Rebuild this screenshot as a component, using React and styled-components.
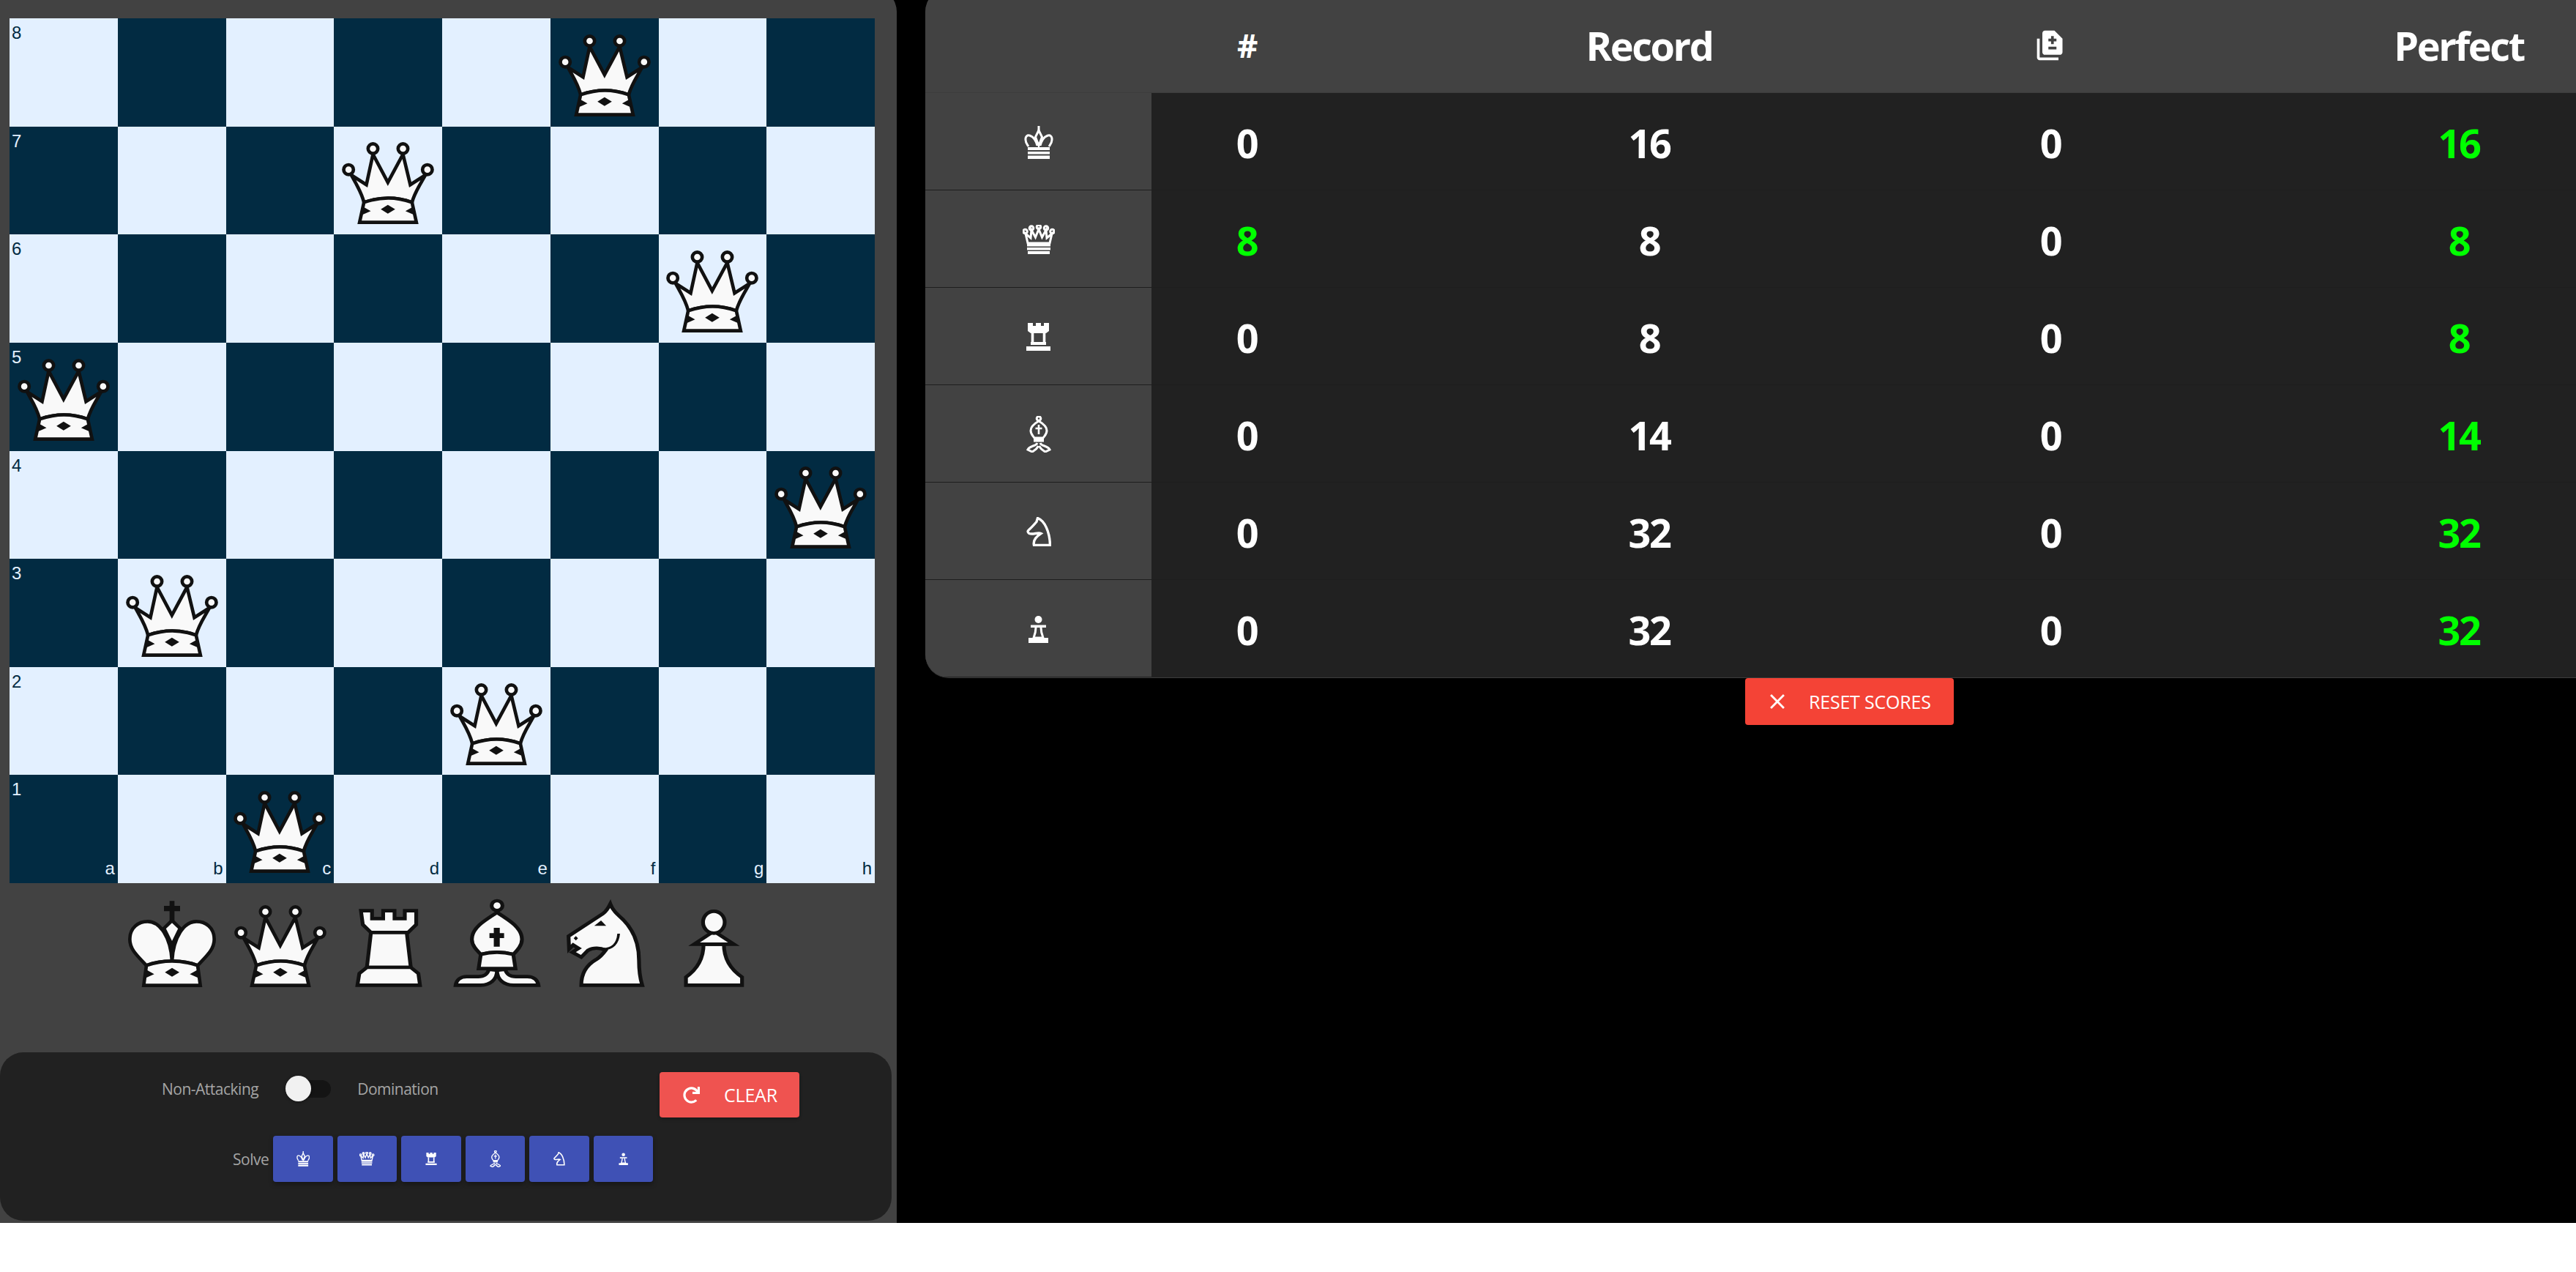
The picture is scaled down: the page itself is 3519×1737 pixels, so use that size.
import React from 'react';
import styled, { createGlobalStyle } from 'styled-components';
import { FaRedo } from 'react-icons/fa';
import { MdClose } from 'react-icons/md';

const GlobalStyle = createGlobalStyle`
  html, body {
    margin: 0;
    padding: 0;
    background: #fff;
    overflow: hidden;
  }
`;

const Page = styled.div`
  display: flex;
  align-items: flex-start;
  height: 1670px;
  background: #000;
  overflow: hidden;
  font-family: 'Open Sans', 'Noto Sans', sans-serif;
`;

const BoardPanel = styled.section`
  flex: 0 0 1225px;
  display: flex;
  flex-direction: column;
  height: 1686px;
  margin-top: -16px;
  background: #424242;
  border-top-right-radius: 32px;
`;

const Board = styled.div`
  display: grid;
  grid-template-columns: repeat(8, minmax(0, 1fr));
  grid-template-rows: repeat(8, minmax(0, 1fr));
  width: 1182px;
  height: 1181px;
  margin: 41px 0 0 13px;
  font-family: 'Liberation Sans', Arial, sans-serif;
`;

const Square = styled.div`
  position: relative;
  display: flex;
  align-items: center;
  justify-content: center;
  background: ${props => (props.$dark ? '#022b42' : '#e3f0ff')};
  color: ${props => (props.$dark ? '#e3f0ff' : '#022b42')};
`;

const Rank = styled.span`
  position: absolute;
  top: 6px;
  left: 3px;
  font-size: 24px;
  line-height: 28px;
`;

const File = styled.span`
  position: absolute;
  right: 4px;
  bottom: 6px;
  font-size: 24px;
  line-height: 28px;
`;

const Tray = styled.div`
  display: flex;
  margin: 15px 0 0 161px;
`;

const BoardPiece = styled.div`
  display: flex;
  flex-shrink: 0;
  margin-top: -4px;
`;

const ControlsCard = styled.div`
  display: flex;
  flex-direction: column;
  width: 1218px;
  height: 230px;
  margin-top: 86px;
  background: #212121;
  border-radius: 32px;
`;

const ModeRow = styled.div`
  display: flex;
  align-items: flex-start;
  padding: 27px 0 0 221px;
`;

const Label = styled.span`
  font-size: 21px;
  font-weight: 400;
  line-height: 28px;
  letter-spacing: -0.5px;
  color: rgba(255, 255, 255, 0.6);
`;

const ModeLabels = styled.div`
  display: flex;
  align-items: center;
  width: 680px;
  height: 46px;
`;

const Switch = styled.div`
  position: relative;
  width: 57px;
  height: 24px;
  margin: 0 36px 0 42px;
  border-radius: 12px;
  background: #141414;
`;

const Knob = styled.div`
  position: absolute;
  top: -6px;
  left: -5px;
  width: 35px;
  height: 35px;
  border-radius: 50%;
  background: #f1f1f1;
  box-shadow: 0 1px 4px rgba(0, 0, 0, 0.4);
`;

const ActionButton = styled.button`
  display: flex;
  align-items: center;
  box-sizing: border-box;
  width: ${props => props.$width}px;
  height: ${props => props.$height}px;
  padding: 0 0 0 ${props => props.$pad}px;
  border: 0;
  border-radius: 4px;
  background: ${props => props.$bg};
  color: #fff;
  font-family: inherit;
  font-size: 25px;
  letter-spacing: -0.2px;
  text-transform: uppercase;
  box-shadow: 0 2px 4px rgba(0, 0, 0, 0.3);
`;

const ButtonText = styled.span`
  margin-left: ${props => props.$gap}px;
`;

const SolveRow = styled.div`
  display: flex;
  align-items: center;
  gap: 6px;
  margin-top: 25px;
  padding-left: 318px;
`;

const SolveButton = styled.button`
  display: flex;
  align-items: center;
  justify-content: center;
  width: 81.5px;
  height: 63px;
  padding: 0;
  border: 0;
  border-radius: 4px;
  background: #3f51b5;
  color: #fff;
  box-shadow: 0 3px 6px rgba(0, 0, 0, 0.35);
`;

const ScoresPanel = styled.section`
  flex: 0 0 2525px;
  display: flex;
  flex-direction: column;
  align-items: center;
  margin: -16px 0 0 39px;
`;

const ScoreTable = styled.div`
  width: 100%;
  overflow: hidden;
  border-radius: 32px;
  background: #212121;
  border-bottom: 1px solid #3c3c3c;
  font-weight: 700;
  color: #fff;
`;

const Row = styled.div`
  display: grid;
  grid-template-columns: 309px 260px 840px 256px 860px;
  height: ${props => (props.$head ? 143 : 133)}px;
  background: ${props => (props.$head ? '#424242' : 'transparent')};
  border-bottom: 1px solid ${props => (props.$last ? 'transparent' : 'rgba(0, 0, 0, 0.08)')};
  box-sizing: border-box;
`;

const PieceCell = styled.div`
  display: flex;
  align-items: center;
  justify-content: center;
  padding-top: 2px;
  background: #424242;
`;

const Cell = styled.div`
  display: flex;
  align-items: center;
  justify-content: center;
  padding-top: 3px;
  font-size: ${props => props.$size || 54}px;
  letter-spacing: -2.4px;
  color: ${props => (props.$hit ? '#00ff00' : '#fff')};
`;

const HeadCell = styled(Cell)`
  padding-top: 13px;
`;

const PIECES = {
  k: {
    box: '33 60 444 390',
    art: (
      <>
        <path d="M245 88h20v20h23v22h-23v42h-20v-42h-23v-22h23z" fill="#111" stroke="none" />
        <path d="M255 168L222 200L255 268L288 200Z" />
        <path d="M150 352C110 310 82 285 82 245C82 195 120 172 155 172C205 172 250 235 255 335C215 335 180 340 150 352Z" />
        <path d="M360 352C400 310 428 285 428 245C428 195 390 172 355 172C305 172 260 235 255 335C295 335 330 340 360 352Z" />
        <path d="M150 352C220 328 290 328 360 352L371 434H139Z" />
        <path d="M255 362L285 380L255 398L226 380Z" fill="#111" stroke="none" />
        <path d="M150 370L182 388L145 404ZM360 370L328 388L365 404Z" fill="#111" stroke="none" />
      </>
    ),
  },
  q: {
    box: '476.5 60 444 390',
    art: (
      <>
        <path d="M600 352C590 310 570 280 548 240L610 280L637 155L698 270L760 155L790 280L852 240C830 280 808 310 797 352C730 328 670 328 600 352Z" />
        <circle cx="537" cy="218" r="20" />
        <circle cx="637" cy="132" r="20" />
        <circle cx="760" cy="132" r="20" />
        <circle cx="860" cy="218" r="20" />
        <path d="M600 352C670 328 730 328 797 352L815 434H582Z" />
        <path d="M698 362L728 380L698 398L669 380Z" fill="#111" stroke="none" />
        <path d="M596 370L628 388L590 404ZM802 370L770 388L808 404Z" fill="#111" stroke="none" />
      </>
    ),
  },
  r: {
    box: '-9.5 60 400 390',
    art: (
      <>
        <path d="M88 128H129V160H170V128H212V160H250V128H292V185L262 217H125L95 185Z" />
        <path d="M125 217L110 360H272L257 217Z" />
        <path d="M110 360L82 385L75 433H306L300 385L272 360Z" />
      </>
    ),
  },
  b: {
    box: '390 60 400 390',
    art: (
      <>
        <circle cx="590" cy="107" r="20" />
        <path d="M590 135C540 170 497 200 497 245C497 270 515 290 530 307C570 295 610 295 650 307C665 290 682 270 682 245C682 200 640 170 590 135Z" />
        <path d="M578 198h22v22h16v20h-16v35h-22v-35h-16v-20h16z" fill="#111" stroke="none" />
        <path d="M530 307C570 295 610 295 650 307L658 365H522Z" />
        <path d="M590 372C590 410 565 433 530 433H437C440 412 455 398 478 398H520C545 398 555 388 560 368Z" />
        <path d="M590 372C590 410 615 433 650 433H743C740 412 725 398 702 398H660C635 398 625 388 620 368Z" />
      </>
    ),
  },
  n: {
    box: '794 60 400 390',
    art: (
      <>
        <path d="M905 433C905 385 925 350 960 328C975 318 985 305 995 290C975 280 950 278 930 290L905 318L872 298L895 282L875 268L860 285L858 232L985 140C1000 128 1005 115 1012 100C1020 125 1035 140 1060 165C1100 210 1118 270 1118 330C1118 370 1122 405 1130 433Z" />
        <path d="M985 285C1020 285 1040 262 1043 222" fill="none" strokeWidth="10" />
        <path d="M953 190L978 168L997 190Z" fill="#111" stroke="none" />
        <path d="M885 232L893 241L885 250L877 241Z" fill="#111" stroke="none" />
      </>
    ),
  },
  p: {
    box: '1187.5 60 400 390',
    art: (
      <>
        <path d="M1350 265C1350 320 1330 365 1285 400V433H1492V400C1445 365 1425 320 1425 265Z" />
        <path d="M1388 212L1315 265H1462Z" />
        <ellipse cx="1388" cy="175" rx="40" ry="45" />
      </>
    ),
  },
};

function Piece({ type }) {
  return (
    <svg
      width="148"
      height="130"
      viewBox={PIECES[type].box}
      preserveAspectRatio="none"
      fill="#f9f9f9"
      stroke="#111"
      strokeWidth="14"
    >
      {PIECES[type].art}
    </svg>
  );
}

const ICONS = {
  k: {
    w: 40,
    h: 45,
    art: (
      <>
        <path d="M20 0v7" />
        <path d="M20 6L15.5 15L20 27L24.5 15Z" />
        <path d="M18 27C14 11 1 9 2 19C2 23 4 25 6 28" />
        <path d="M22 27C26 11 39 9 38 19C38 23 36 25 34 28" />
        <path d="M5 29H35V33H5ZM5 35H35V38.5H5ZM5 40.5H35V45H5Z" fill="currentColor" stroke="none" />
      </>
    ),
  },
  q: {
    w: 44,
    h: 40,
    art: (
      <>
        <circle cx="3.5" cy="9" r="2.8" />
        <circle cx="12" cy="4.5" r="2.8" />
        <circle cx="22" cy="3" r="2.8" />
        <circle cx="32" cy="4.5" r="2.8" />
        <circle cx="40.5" cy="9" r="2.8" />
        <path d="M7 25L4 12L11 18L12 7L17.5 17L22 6L26.5 17L32 7L33 18L40 12L37 25Z" />
        <path d="M6 26H38V29.5H6ZM6 31H38V34.5H6ZM7 36H37V40H7Z" fill="currentColor" stroke="none" />
      </>
    ),
  },
  r: {
    w: 35,
    h: 38,
    art: (
      <>
        <path d="M3 0H10V4H14V0H21V4H25V0H32V11L28 14H7L3 11Z" fill="currentColor" stroke="none" />
        <path d="M9.5 14V28M25.5 14V28" strokeWidth="3.6" />
        <path d="M7 26H28V30H7Z" fill="currentColor" stroke="none" />
        <path d="M1 32H34V38H1Z" fill="currentColor" stroke="none" />
      </>
    ),
  },
  b: {
    w: 34,
    h: 50,
    art: (
      <>
        <circle cx="17" cy="3.5" r="2.8" />
        <path d="M17 7C10 11 6 15 6 20C6 25 9 27 11 30H23C25 27 28 25 28 20C28 15 24 11 17 7Z" />
        <path d="M17 12V25M12.5 17H21.5" strokeWidth="2.6" />
        <path d="M10 31H24V35.5H10Z" fill="currentColor" stroke="none" />
        <path d="M15 37C13 42 5 40 2 46L8 49C11 47 14 46 16.5 41" strokeWidth="3" />
        <path d="M19 37C21 42 29 40 32 46L26 49C23 47 20 46 17.5 41" strokeWidth="3" />
      </>
    ),
  },
  n: {
    w: 34,
    h: 40,
    art: (
      <>
        <path
          d="M10.5 38.5C9 32 13 27 20 22.5C16 20.5 9 24.5 4 22.5C1.5 21 1.5 19 3.5 17.5C7 14.5 11 10 14 6.5L15.5 1.5C25 5 32 20 32.5 38.5Z"
          strokeWidth="3.4"
        />
      </>
    ),
  },
  p: {
    w: 29,
    h: 38,
    art: (
      <>
        <circle cx="14.5" cy="6" r="5" fill="currentColor" stroke="none" />
        <path d="M4 13.5H25V17H4Z" fill="currentColor" stroke="none" />
        <path d="M11 17C11 23 10 26 8 31H21C19 26 18 23 18 17" />
        <path d="M1 31H28V38H1Z" fill="currentColor" stroke="none" />
      </>
    ),
  },
};

function PieceIcon({ type, scale = 1 }) {
  const icon = ICONS[type];
  return (
    <svg
      width={icon.w * scale}
      height={icon.h * scale}
      viewBox={`0 0 ${icon.w} ${icon.h}`}
      fill="none"
      stroke="currentColor"
      strokeWidth="3"
    >
      {icon.art}
    </svg>
  );
}

const QUEENS = { '0,5': 1, '1,3': 1, '2,6': 1, '3,0': 1, '4,7': 1, '5,1': 1, '6,4': 1, '7,2': 1 };
const FILES = ['a', 'b', 'c', 'd', 'e', 'f', 'g', 'h'];
const ORDER = ['k', 'q', 'r', 'b', 'n', 'p'];

const SCORES = [
  { type: 'k', count: 0, record: 16, perfect: 16 },
  { type: 'q', count: 8, record: 8, perfect: 8 },
  { type: 'r', count: 0, record: 8, perfect: 8 },
  { type: 'b', count: 0, record: 14, perfect: 14 },
  { type: 'n', count: 0, record: 32, perfect: 32 },
  { type: 'p', count: 0, record: 32, perfect: 32 },
];

function ChessBoard() {
  const squares = [];
  for (let r = 0; r < 8; r++) {
    for (let c = 0; c < 8; c++) {
      squares.push(
        <Square key={`${r}-${c}`} $dark={(r + c) % 2 === 1}>
          {c === 0 && <Rank>{8 - r}</Rank>}
          {r === 7 && <File>{FILES[c]}</File>}
          {QUEENS[`${r},${c}`] && (
            <BoardPiece>
              <Piece type="q" />
            </BoardPiece>
          )}
        </Square>
      );
    }
  }
  return <Board>{squares}</Board>;
}

export default function App() {
  return (
    <Page>
      <GlobalStyle />
      <BoardPanel>
        <ChessBoard />
        <Tray>
          {ORDER.map(type => (
            <Piece key={type} type={type} />
          ))}
        </Tray>
        <ControlsCard>
          <ModeRow>
            <ModeLabels>
              <Label>Non-Attacking</Label>
              <Switch>
                <Knob />
              </Switch>
              <Label>Domination</Label>
            </ModeLabels>
            <div>
              <ActionButton $width={191} $height={62} $pad={32} $bg="#ef5350">
                <FaRedo size={23} />
                <ButtonText $gap={33}>Clear</ButtonText>
              </ActionButton>
            </div>
          </ModeRow>
          <SolveRow>
            <Label>Solve</Label>
            {ORDER.map(type => (
              <SolveButton key={type}>
                <PieceIcon type={type} scale={0.46} />
              </SolveButton>
            ))}
          </SolveRow>
        </ControlsCard>
      </BoardPanel>
      <ScoresPanel>
        <ScoreTable>
          <Row $head>
            <div />
            <HeadCell $size={44}>#</HeadCell>
            <HeadCell>Record</HeadCell>
            <HeadCell>
              <svg width="44" height="44" viewBox="0 0 24 24" fill="#fff">
                <path d="M18 23H4c-1.1 0-2-.9-2-2V7h2v14h14v2zM15 1H8c-1.1 0-1.99.9-1.99 2L6 17c0 1.1.89 2 1.99 2H19c1.1 0 2-.9 2-2V7l-6-6zm1.5 14h-6v-2h6v2zm0-6h-2v2h-2V9h-2V7h2V5h2v2h2v2z" />
              </svg>
            </HeadCell>
            <HeadCell>Perfect</HeadCell>
          </Row>
          {SCORES.map((s, i) => (
            <Row key={s.type} $last={i === SCORES.length - 1}>
              <PieceCell>
                <PieceIcon type={s.type} />
              </PieceCell>
              <Cell $hit={s.count === s.perfect}>{s.count}</Cell>
              <Cell>{s.record}</Cell>
              <Cell>0</Cell>
              <Cell $hit>{s.perfect}</Cell>
            </Row>
          ))}
        </ScoreTable>
        <ActionButton $width={285} $height={64} $pad={27} $bg="#f44336">
          <MdClose size={34} />
          <ButtonText $gap={26}>Reset Scores</ButtonText>
        </ActionButton>
      </ScoresPanel>
    </Page>
  );
}
